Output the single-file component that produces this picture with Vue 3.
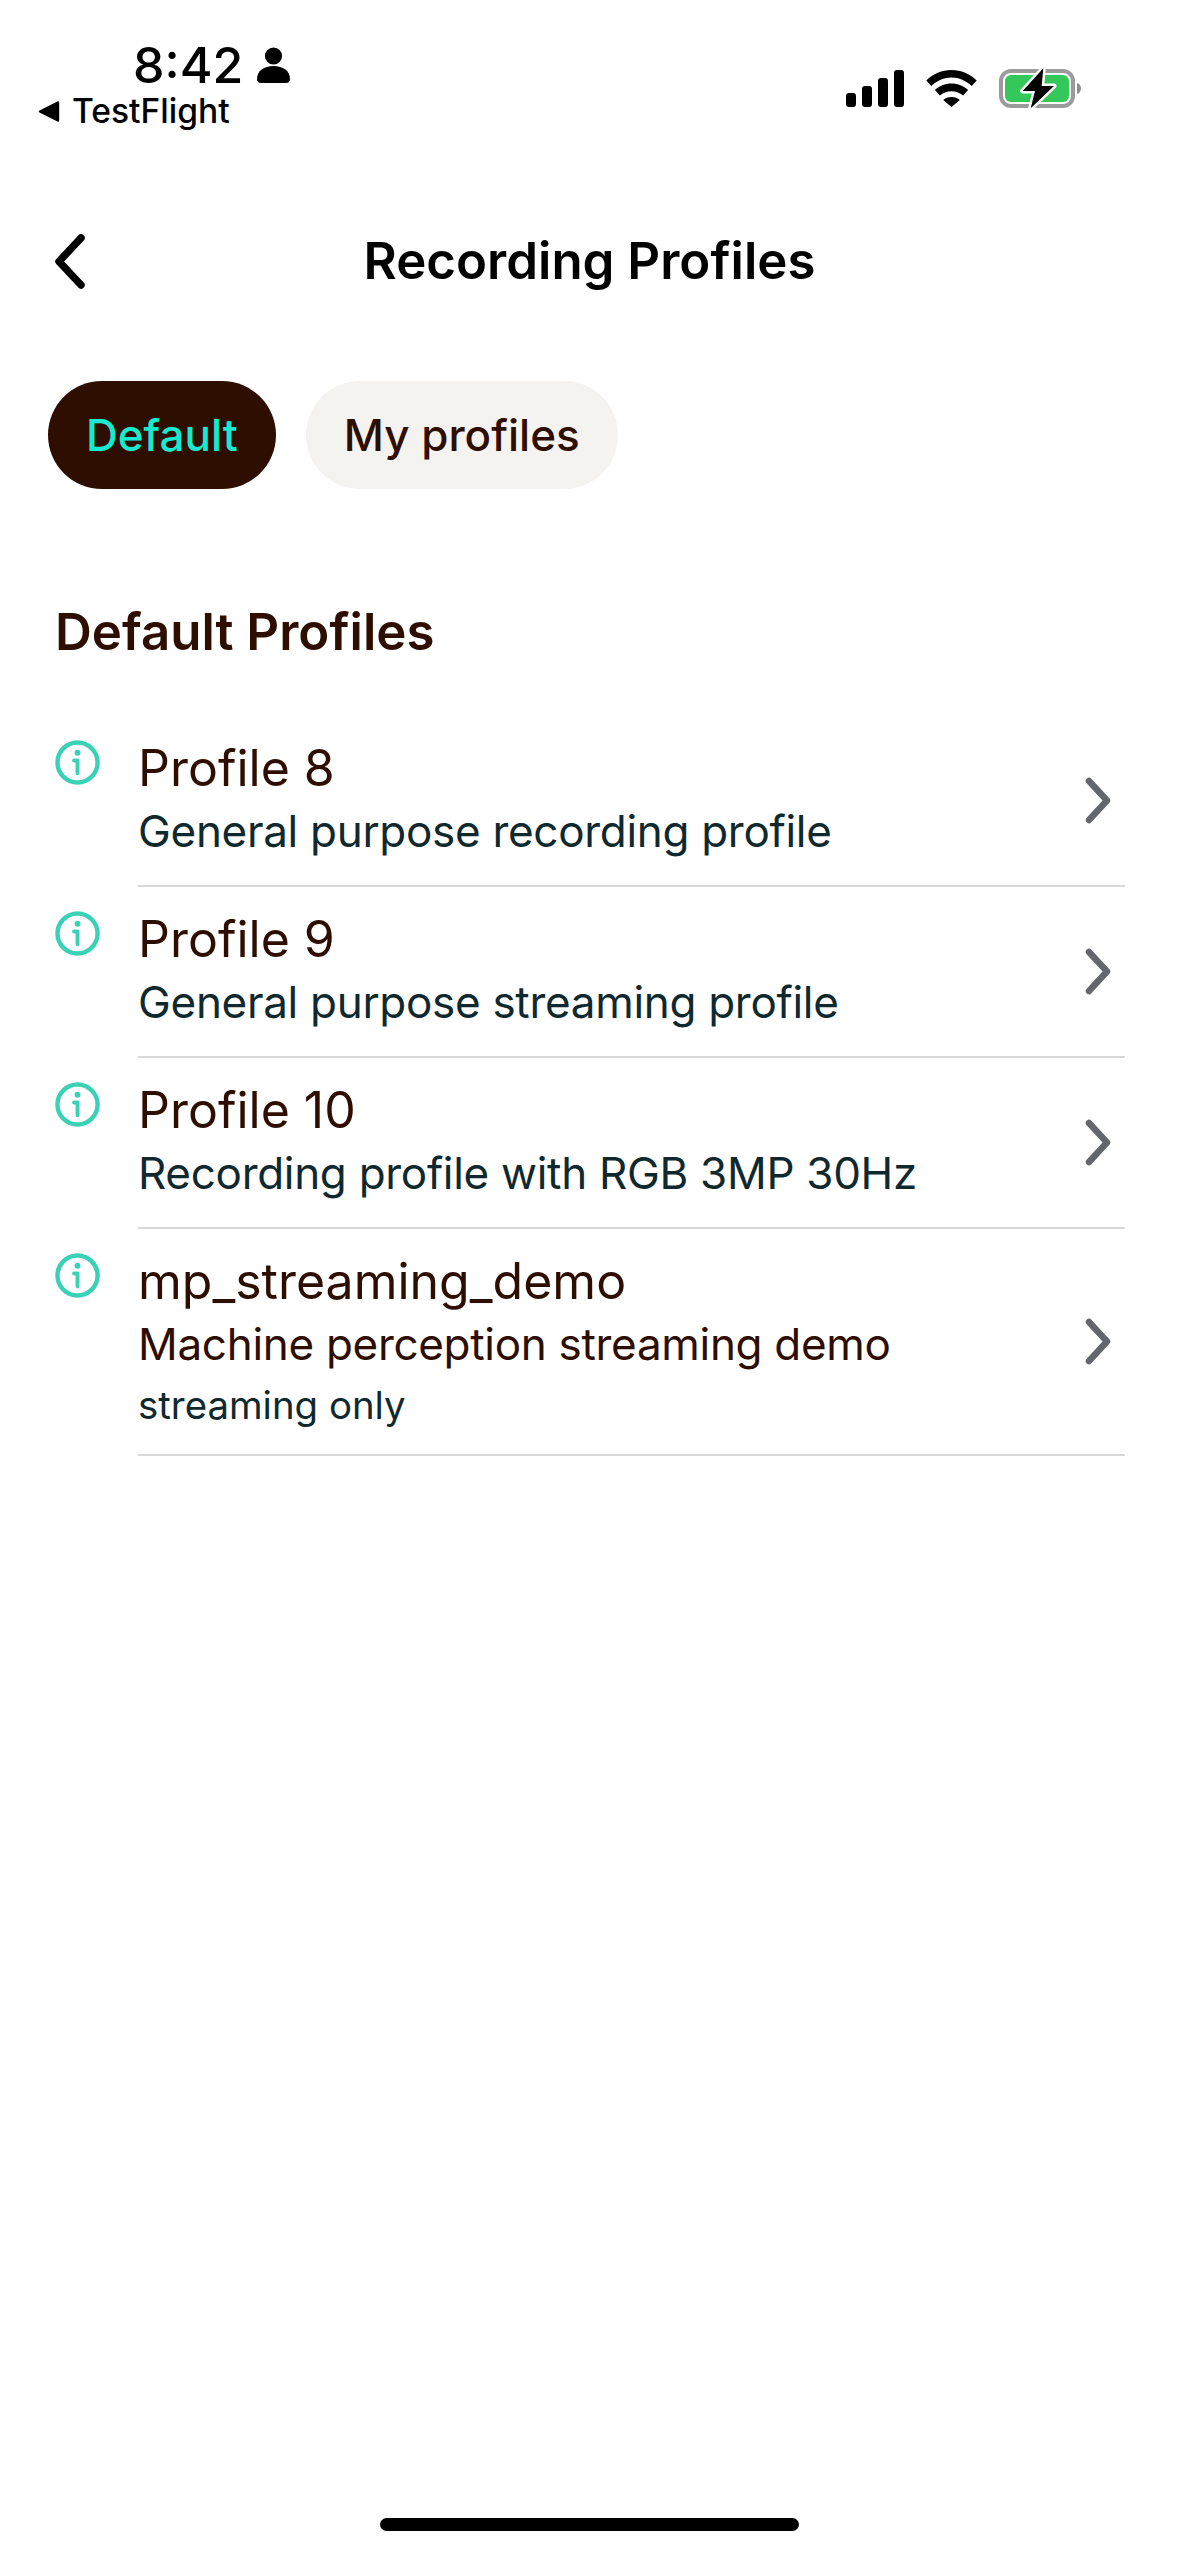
<template>
  <div class="screen">
    <header class="status-bar">
      <div class="status-left">
        <div class="time-row">
          <span class="time">8:42</span>
          <svg class="person" viewBox="0 0 33 36" aria-hidden="true">
            <circle cx="16.5" cy="9" r="8.6" fill="#000" />
            <path d="M0 32c0-8 7-13 16.5-13S33 24 33 32c0 2.600-1.500 4-4 4H4c-2.500 0-4-1.400-4-4z" fill="#000" />
          </svg>
        </div>
        <div class="back-app">
          <svg class="back-tri" viewBox="0 0 22 21" aria-hidden="true">
            <path d="M20 1.500v18L2 10.500z" fill="#000" stroke="#000" stroke-width="2.400" stroke-linejoin="round" />
          </svg>
          <span>TestFlight</span>
        </div>
      </div>
      <div class="status-right">
        <svg class="signal" viewBox="0 0 58 37" aria-hidden="true">
          <rect x="0" y="23" width="10" height="14" rx="3" fill="#000" />
          <rect x="16" y="16" width="10" height="21" rx="3" fill="#000" />
          <rect x="32" y="8" width="10" height="29" rx="3" fill="#000" />
          <rect x="48" y="0" width="10" height="37" rx="3" fill="#000" />
        </svg>
        <svg class="wifi" viewBox="0 0 51 37" aria-hidden="true">
          <path d="M25.500 0C15.800 0 7.100 3.800.300 10.400l5 5.600C11 10.800 17.900 7.600 25.500 7.600s14.500 3.200 20.200 8.400l5-5.600C43.900 3.800 35.200 0 25.500 0z" fill="#000" />
          <path d="M25.500 13.500c-6.500 0-12.200 2.500-16.600 6.500l5 5.600c3-2.700 7.100-4.400 11.600-4.400s8.600 1.700 11.600 4.400l5-5.600c-4.400-4-10.100-6.500-16.600-6.500z" fill="#000" />
          <path d="M25.500 27c-3.300 0-6.200 1.200-8.300 3.100l8.300 6.900 8.300-6.900C31.700 28.200 28.800 27 25.500 27z" fill="#000" />
        </svg>
        <svg class="battery" viewBox="0 -1 82 41" aria-hidden="true">
          <rect x="2" y="2" width="72" height="35" rx="10" fill="none" stroke="#9b9b9b" stroke-width="4" />
          <rect x="6" y="6" width="64" height="27" rx="6" fill="#34c759" />
          <path d="M78 14c2.500.8 4 3 4 5.500S80.500 24.200 78 25z" fill="#8e8e8e" />
          <path d="M44.300-.7L23.700 22H36l-4.300 17.300L55 17H42.700z" fill="#000" stroke="#fff" stroke-width="5" stroke-linejoin="round" paint-order="stroke" />
        </svg>
      </div>
    </header>

    <nav class="nav-bar">
      <svg class="nav-back" viewBox="0 0 30 55" aria-hidden="true">
        <path d="M26 4L4 27.500 26 51" fill="none" stroke="#000" stroke-width="7.500" stroke-linecap="round" stroke-linejoin="round" />
      </svg>
      <h1 class="nav-title">Recording Profiles</h1>
      <span></span>
    </nav>

    <div class="tabs">
      <button class="tab active">Default</button>
      <button class="tab">My profiles</button>
    </div>

    <h2 class="section-title">Default Profiles</h2>

    <ul class="profile-list">
      <li v-for="p in profiles" :key="p.name" class="profile-row">
        <svg class="info" viewBox="0 0 46 46" aria-hidden="true">
          <circle cx="23" cy="23" r="20.500" fill="none" stroke="#3bd1b6" stroke-width="4.500" />
          <circle cx="23" cy="13" r="3" fill="#3bd1b6" />
          <path d="M19.500 21H23v13" fill="none" stroke="#3bd1b6" stroke-width="4" stroke-linecap="round" stroke-linejoin="round" />
        </svg>
        <div class="profile-body">
          <div class="profile-text">
            <div class="profile-name">{{ p.name }}</div>
            <div class="profile-desc" :class="{ brown: p.note }">{{ p.desc }}</div>
            <div v-if="p.note" class="profile-note">{{ p.note }}</div>
          </div>
          <svg class="chevron" viewBox="0 0 26 47" aria-hidden="true">
            <path d="M4 4l18 19.500L4 43" fill="none" stroke="#63666a" stroke-width="6.500" stroke-linecap="round" stroke-linejoin="round" />
          </svg>
        </div>
      </li>
    </ul>

    <div class="home-indicator"></div>
  </div>
</template>

<script setup>
const profiles = [
  { name: 'Profile 8', desc: 'General purpose recording profile' },
  { name: 'Profile 9', desc: 'General purpose streaming profile' },
  { name: 'Profile 10', desc: 'Recording profile with RGB 3MP 30Hz' },
  { name: 'mp_streaming_demo', desc: 'Machine perception streaming demo', note: 'streaming only' },
]
</script>

<style>
html,
body {
  margin: 0;
  background: #fff;
}
</style>

<style scoped>
.screen {
  width: 1179px;
  height: 2556px;
  box-sizing: border-box;
  background: #fff;
  display: flex;
  flex-direction: column;
  font-family: Inter, "Liberation Sans", sans-serif;
  color: #2d0e00;
  overflow: hidden;
}

.status-bar {
  height: 128px;
  flex: none;
  box-sizing: border-box;
  padding: 38px 98px 0 38px;
  display: flex;
  justify-content: space-between;
  align-items: flex-start;
}

.status-left {
  display: flex;
  flex-direction: column;
  color: #000;
}

.time-row {
  display: flex;
  align-items: center;
  gap: 14px;
  margin-left: 95px;
  height: 53px;
}

.time {
  font-size: 50px;
  font-weight: 500;
  line-height: 54px;
}

.person {
  width: 33px;
  height: 36px;
}

.back-app {
  display: flex;
  align-items: center;
  gap: 12px;
  font-size: 33.600px;
  font-weight: 500;
  line-height: 40px;
}

.back-tri {
  width: 22px;
  height: 21px;
}

.status-right {
  display: flex;
  align-items: center;
  gap: 22px;
  margin-top: 30px;
}

.signal {
  width: 58px;
  height: 37px;
}

.wifi {
  width: 51px;
  height: 37px;
}

.battery {
  width: 82px;
  height: 41px;
}

.nav-bar {
  height: 80px;
  margin-top: 93px;
  flex: none;
  display: grid;
  grid-template-columns: 1fr auto 1fr;
  align-items: center;
  padding: 0 55px;
}

.nav-back {
  width: 30px;
  height: 55px;
}

.nav-title {
  margin: 0;
  font-size: 51px;
  font-weight: 600;
  color: #000;
  line-height: 56px;
}

.tabs {
  display: flex;
  gap: 30px;
  padding-left: 48px;
  margin-top: 80px;
  flex: none;
}

.tab {
  height: 108px;
  border: none;
  border-radius: 54px;
  padding: 0 38px;
  font-family: inherit;
  font-size: 44px;
  font-weight: 500;
  background: #f5f3f0;
  color: #2d0e00;
}

.tab.active {
  background: #2d0e00;
  color: #14ebd0;
}

.section-title {
  margin: 113px 0 0 55px;
  font-size: 51px;
  font-weight: 600;
  line-height: 60px;
  color: #2d0e00;
}

.profile-list {
  list-style: none;
  margin: 54px 54px 0 55px;
  padding: 0;
}

.profile-row {
  display: flex;
  gap: 38px;
}

.info {
  width: 45px;
  height: 45px;
  flex: none;
  margin-top: 24px;
}

.profile-body {
  flex: 1;
  display: flex;
  align-items: center;
  justify-content: space-between;
  border-bottom: 2px solid #d9d9dc;
  padding: 21px 14px 22px 0;
}

.profile-name {
  font-size: 50px;
  font-weight: 420;
  line-height: 62px;
  color: #2d0e00;
}

.profile-desc {
  font-size: 44px;
  letter-spacing: -0.3px;
  line-height: 64px;
  color: #10292f;
}

.profile-desc.brown {
  color: #2d0e00;
}

.profile-note {
  font-size: 38.400px;
  line-height: 58px;
  margin-bottom: -2px;
  color: #10292f;
}

.chevron {
  width: 26px;
  height: 47px;
  flex: none;
}

.home-indicator {
  width: 419px;
  height: 13px;
  border-radius: 7px;
  background: #000;
  margin: auto auto 25px;
  flex: none;
}
</style>
